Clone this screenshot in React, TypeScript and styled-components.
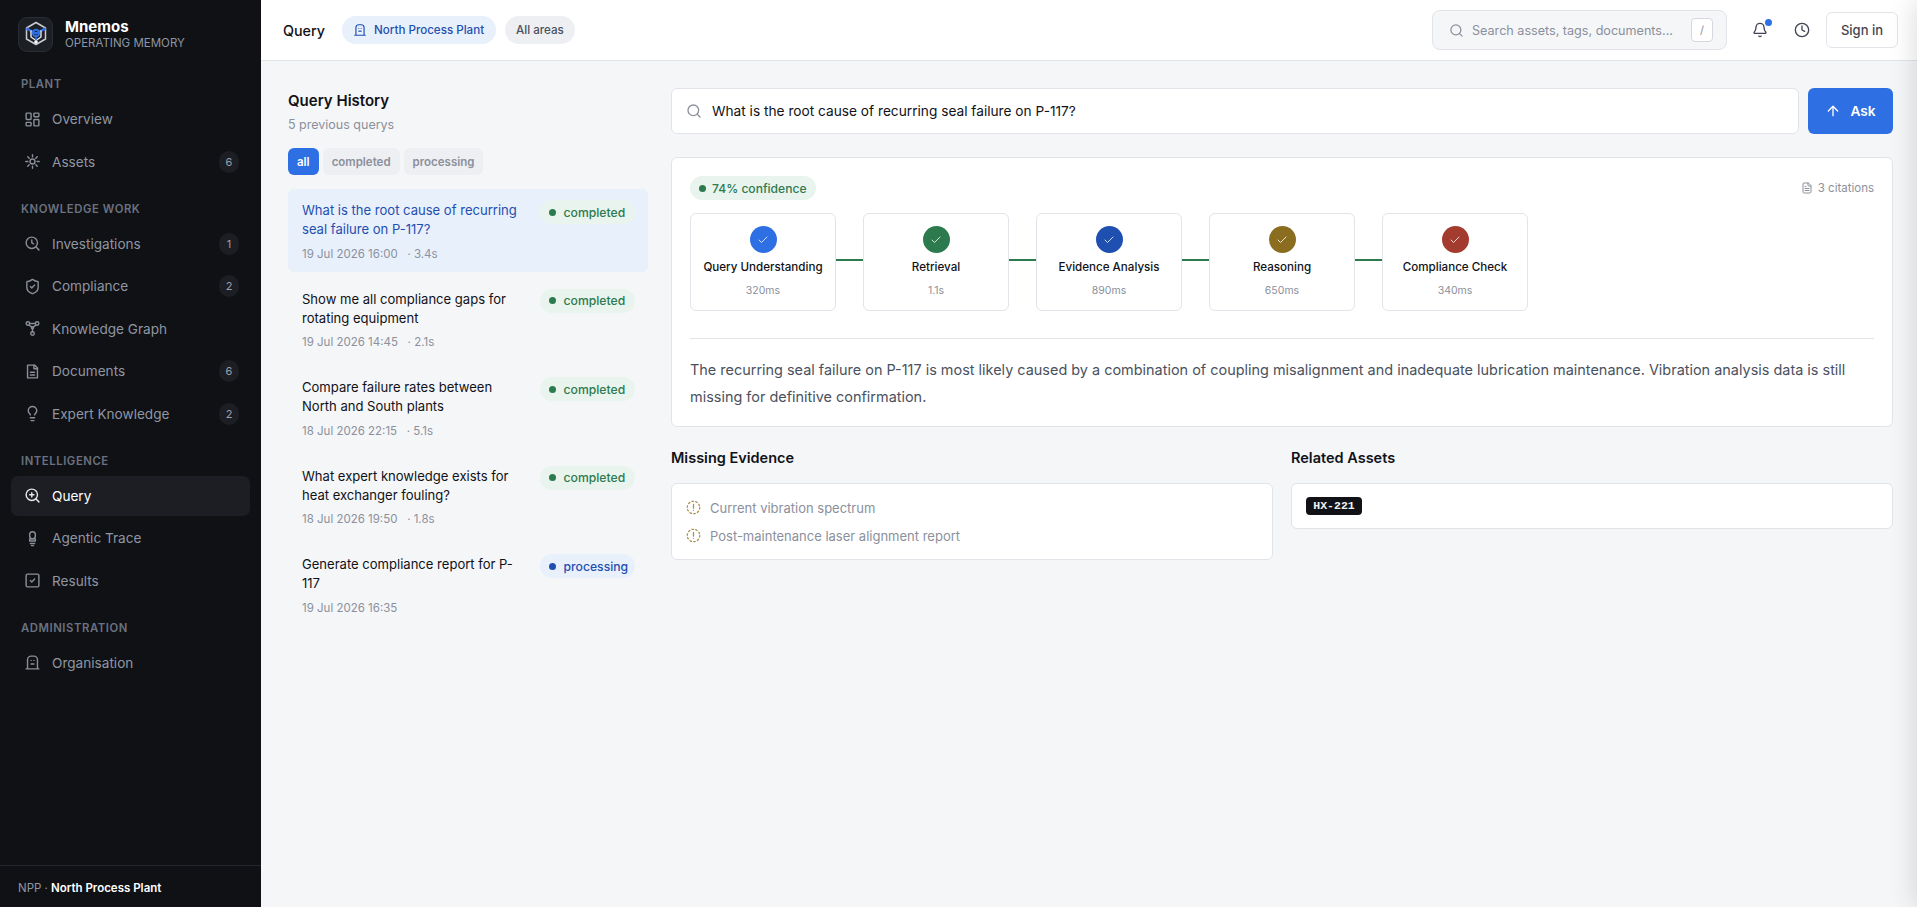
import * as React from 'react';
import styled, { createGlobalStyle } from 'styled-components';
import { ArrowUp, Bell, Check, Clock, FileText, LayoutDashboard, Lightbulb, Search, ShieldCheck, SquareCheck, ZoomIn } from 'lucide-react';

const Global = createGlobalStyle`
  * { box-sizing: border-box; }
  html, body { margin: 0; height: 100%; overflow: hidden; }
  body { font-family: Inter, "Noto Sans", sans-serif; background: #f5f6f8; color: #101218; }
`;

const Shell = styled.div`
  display: flex;
  height: 907px;
  overflow: hidden;
`;

const Aside = styled.aside`
  flex: 0 0 261px;
  display: flex;
  flex-direction: column;
  background: #0f1115;
  color: #9aa0ac;
`;

const Brand = styled.div`
  display: flex;
  align-items: center;
  gap: 12px;
  height: 68px;
  padding: 0 18px;
`;

const LogoBox = styled.div`
  width: 35px;
  height: 35px;
  display: grid;
  place-items: center;
  border-radius: 9px;
  border: 1px solid #2a2d34;
  background: #1c1f24;
`;

const BrandName = styled.div`
  font-size: 15px;
  line-height: 18px;
  font-weight: 700;
  color: #fff;
`;

const BrandSub = styled.div`
  font-size: 11.5px;
  line-height: 15px;
  color: #8f96a3;
`;

const Nav = styled.nav`
  flex: 1;
  display: flex;
  flex-direction: column;
  gap: 18.5px;
  padding: 8px 11px 0;
`;

const Section = styled.div`
  display: flex;
  flex-direction: column;
  gap: 2px;
`;

const SectionLabel = styled.div`
  height: 21px;
  padding: 0 10px;
  line-height: 16px;
  font-size: 11.3px;
  font-weight: 600;
  letter-spacing: 0.05em;
  color: #6b7180;
`;

const NavRow = styled.div<{ $active?: boolean }>`
  display: flex;
  align-items: center;
  gap: 11px;
  height: 40.5px;
  padding: 0 11px 0 13px;
  border-radius: 7px;
  font-size: 13.6px;
  color: ${p => (p.$active ? '#fff' : '#8f96a3')};
  background: ${p => (p.$active ? '#1c1e24' : 'transparent')};
  svg { flex: none; color: ${p => (p.$active ? '#e6e7ea' : '#8a8e97')}; }
`;

const NavText = styled.span`
  flex: 1;
`;

const NavBadge = styled.span`
  width: 20px;
  height: 22px;
  border-radius: 11px;
  display: grid;
  place-items: center;
  font-size: 11px;
  background: #1c1e24;
  color: #9aa0ac;
`;

const AsideFooter = styled.div`
  height: 42px;
  padding: 2px 18px 0;
  display: flex;
  align-items: center;
  border-top: 1px solid #23262d;
  font-size: 11.5px;
  color: #8f96a3;
  b { color: #fff; font-weight: 600; margin-left: 3px; }
`;

const Body = styled.div`
  flex: 1;
  min-width: 0;
  display: flex;
  flex-direction: column;
`;

const TopBar = styled.header`
  flex: 0 0 61px;
  display: flex;
  align-items: center;
  padding: 0 19px 0 22px;
  background: #fff;
  border-bottom: 1px solid #e2e4e9;
`;

const PageTitle = styled.div`
  font-size: 14.3px;
  font-weight: 500;
  margin-right: 17px;
`;

const ContextPill = styled.div<{ $blue?: boolean }>`
  display: flex;
  align-items: center;
  gap: 7px;
  height: 28px;
  padding: 0 11px;
  margin-right: 9px;
  border-radius: 14px;
  font-size: 11.6px;
  font-weight: 500;
  color: ${p => (p.$blue ? '#1f4fb0' : '#4a5160')};
  background: ${p => (p.$blue ? '#e8f0fc' : '#eeeff2')};
`;

const SitePill = styled(ContextPill)`
  padding-right: 12px;
`;

const SearchBox = styled.div`
  margin-left: auto;
  width: 295px;
  height: 40px;
  display: flex;
  align-items: center;
  gap: 8px;
  padding: 0 13px 0 16px;
  background: #f5f6f8;
  border: 1px solid #e2e4e9;
  border-radius: 8px;
  font-size: 12.6px;
  color: #8b909c;
  svg { flex: none; }
`;

const SearchText = styled.span`
  flex: 1;
  white-space: nowrap;
`;

const Kbd = styled.span`
  width: 22px;
  height: 24px;
  display: grid;
  place-items: center;
  background: #fff;
  border: 1px solid #d6d8de;
  border-radius: 4px;
  font-size: 11px;
`;

const IconButton = styled.div<{ $first?: boolean }>`
  position: relative;
  width: 16px;
  height: 16px;
  margin-left: ${p => (p.$first ? 25 : 26)}px;
  color: #3f4450;
  display: grid;
  place-items: center;
`;

const IconDot = styled.span`
  position: absolute;
  top: -3px;
  right: -4px;
  width: 7px;
  height: 7px;
  border-radius: 50%;
  background: #2f6fe4;
`;

const SignIn = styled.div`
  margin-left: 16px;
  width: 72px;
  height: 36px;
  display: grid;
  place-items: center;
  background: #fff;
  border: 1px solid #e2e4e9;
  border-radius: 6px;
  font-size: 13px;
  font-weight: 500;
  color: #3f4450;
`;

const Content = styled.main`
  flex: 1;
  display: flex;
  gap: 23px;
  padding: 27px 24px 0 27px;
`;

const History = styled.section`
  flex: 0 0 360px;
  display: flex;
  flex-direction: column;
`;

const HistoryTitle = styled.h2`
  margin: 0;
  font-size: 15px;
  line-height: 26px;
  font-weight: 600;
`;

const HistorySub = styled.div`
  font-size: 12.5px;
  line-height: 22px;
  color: #8b909c;
`;

const Filters = styled.div`
  display: flex;
  gap: 4px;
  margin: 12px 0 14px;
`;

const Filter = styled.div<{ $on?: boolean }>`
  height: 27px;
  display: flex;
  align-items: center;
  padding: 0 9px;
  border-radius: 6px;
  font-size: 11.5px;
  font-weight: 600;
  color: ${p => (p.$on ? '#fff' : '#8b909c')};
  background: ${p => (p.$on ? '#2f6fe4' : '#eeeff2')};
`;

const HistoryList = styled.div`
  display: flex;
  flex-direction: column;
  gap: 5.6px;
`;

const HistoryItem = styled.div<{ $on?: boolean }>`
  display: flex;
  align-items: flex-start;
  justify-content: space-between;
  gap: 12px;
  height: 83px;
  padding: 12px 13px 0 14px;
  border-radius: 6px;
  background: ${p => (p.$on ? '#e8f0fc' : 'transparent')};
`;

const ItemBody = styled.div`
  flex: 1;
  min-width: 0;
`;

const ItemQuestion = styled.div<{ $on?: boolean }>`
  font-size: 13.05px;
  line-height: 19px;
  color: ${p => (p.$on ? '#1f4fb0' : '#101218')};
`;

const ItemMeta = styled.div`
  margin-top: 6.5px;
  font-size: 11.5px;
  line-height: 16px;
  color: #8b909c;
`;

const StatusPill = styled.div<{ $blue?: boolean }>`
  flex: none;
  width: 95px;
  display: flex;
  align-items: center;
  gap: 7.5px;
  height: 24px;
  margin-top: -1px;
  padding: 0 4px 0 9px;
  border-radius: 12px;
  font-size: 12.2px;
  font-weight: 500;
  color: ${p => (p.$blue ? '#1f4fb0' : '#2d7a4f')};
  background: ${p => (p.$blue ? '#e8f0fc' : '#e9f4ee')};
  &::before {
    content: '';
    flex: none;
    width: 7px;
    height: 7px;
    border-radius: 50%;
    background: currentColor;
  }
`;

const Results = styled.section`
  flex: 1;
  min-width: 0;
  display: flex;
  flex-direction: column;
`;

const AskRow = styled.div`
  display: flex;
  gap: 9px;
`;

const AskInput = styled.div`
  flex: 1;
  height: 46px;
  display: flex;
  align-items: center;
  gap: 10px;
  padding: 0 14px;
  background: #fff;
  border: 1px solid #e2e4e9;
  border-radius: 6px;
  font-size: 13.7px;
  svg { color: #8b909c; }
`;

const AskButton = styled.div`
  flex: 0 0 85px;
  height: 46px;
  display: flex;
  align-items: center;
  justify-content: center;
  gap: 9px;
  background: #2f6fe4;
  border-radius: 6px;
  color: #fff;
  font-size: 13.7px;
  font-weight: 600;
`;

const AnswerCard = styled.div`
  margin-top: 23px;
  height: 270px;
  padding: 18px 18px 0;
  background: #fff;
  border: 1px solid #e2e4e9;
  border-radius: 6px;
`;

const AnswerTop = styled.div`
  display: flex;
  align-items: center;
  justify-content: space-between;
`;

const Confidence = styled(StatusPill)`
  width: auto;
  margin-top: 0;
  gap: 6px;
  padding: 0 9px;
  font-size: 12.1px;
`;

const Citations = styled.div`
  display: flex;
  align-items: center;
  gap: 5px;
  font-size: 11.5px;
  color: #8b909c;
`;

const Steps = styled.div`
  display: flex;
  align-items: center;
  margin-top: 13px;
`;

const Step = styled.div`
  flex: 0 0 146px;
  height: 98px;
  display: flex;
  flex-direction: column;
  align-items: center;
  padding-top: 12px;
  border: 1px solid #e2e4e9;
  border-radius: 6px;
`;

const StepDot = styled.div<{ $color: string }>`
  width: 27px;
  height: 27px;
  display: grid;
  place-items: center;
  border-radius: 50%;
  background: ${p => p.$color};
  color: rgba(255, 255, 255, 0.8);
`;

const StepName = styled.div`
  margin-top: 5px;
  font-size: 11.6px;
  line-height: 18px;
  font-weight: 500;
  white-space: nowrap;
`;

const StepTime = styled.div`
  margin-top: 8px;
  font-size: 10.5px;
  line-height: 14px;
  color: #8b909c;
`;

const Connector = styled.div`
  flex: 0 0 27px;
  height: 2px;
  margin-top: -5px;
  background: #2d7a4f;
`;

const Divider = styled.div`
  height: 1px;
  margin-top: 27px;
  background: #e2e4e9;
`;

const AnswerText = styled.p`
  margin: 17px 0 0;
  font-size: 14.45px;
  line-height: 27px;
  color: #4a5160;
`;

const Columns = styled.div`
  display: grid;
  grid-template-columns: 1fr 1fr;
  gap: 18px;
  margin-top: 20px;
`;

const ColumnTitle = styled.h3`
  margin: 0 0 14px;
  font-size: 14.5px;
  line-height: 22px;
  font-weight: 600;
`;

const ColumnCard = styled.div`
  padding: 13px 14px;
  background: #fff;
  border: 1px solid #e2e4e9;
  border-radius: 6px;
`;

const MissingList = styled(ColumnCard)`
  padding: 9.5px 14px;
`;

const MissingRow = styled.div`
  display: flex;
  align-items: center;
  gap: 9px;
  height: 28px;
  font-size: 13px;
  color: #8b909c;
`;

const AssetTag = styled.span`
  display: block;
  width: 56px;
  height: 18px;
  line-height: 18px;
  text-align: center;
  background: #101218;
  border-radius: 4px;
  font-family: "Liberation Mono", monospace;
  font-size: 11.5px;
  font-weight: 700;
  color: #f2f3f5;
`;

const OffscreenDrawer = styled.div`
  position: fixed;
  top: 0;
  bottom: 0;
  left: 100%;
  width: 400px;
  background: #fff;
  box-shadow: -4px 0 24px rgba(0, 0, 0, 0.12);
`;

type IconProps = { size?: number };

const Svg = ({ size = 17, children }: IconProps & { children: React.ReactNode }) => (
  <svg width={size} height={size} viewBox="0 0 24 24" fill="none" stroke="currentColor" strokeWidth="2" strokeLinecap="round" strokeLinejoin="round">
    {children}
  </svg>
);

const Logo = () => (
  <svg width="24" height="26" viewBox="0 0 24 26" fill="none" strokeLinejoin="round" strokeLinecap="round">
    <path d="M12 1.5 21.5 7v11L12 23.5 2.5 18V7z" stroke="#c9ccd2" strokeWidth="1.5" />
    <path d="M4.5 8.5 12 12.5l7.5-4" stroke="#2f6fe4" strokeWidth="2" />
    <path d="M7 10v6l5 3.5 5-3.5v-6" stroke="#e8e9ec" strokeWidth="1.4" />
    <circle cx="12" cy="12" r="3.2" stroke="#2f6fe4" strokeWidth="2" />
    <path d="M12 15v5" stroke="#2f6fe4" strokeWidth="1.6" />
    <circle cx="12" cy="21" r="1.8" fill="#fff" />
    <circle cx="3.6" cy="8" r="1.5" fill="#2f6fe4" />
    <circle cx="20.4" cy="8" r="1.5" fill="#2f6fe4" />
  </svg>
);

const SunIcon = () => (
  <Svg>
    <circle cx="12" cy="12" r="3.5" />
    <path d="M12 2.5v3M12 18.5v3M2.5 12h3M18.5 12h3M5.3 5.3l2 2M16.7 16.7l2 2M5.3 18.7l2-2M16.7 7.3l2-2" />
  </Svg>
);

const ClockSearchIcon = () => (
  <Svg>
    <circle cx="11" cy="11" r="8" />
    <path d="m21 21-4.3-4.3M11 7v4l2.5 1.5" />
  </Svg>
);

const GraphIcon = () => (
  <Svg>
    <circle cx="5.5" cy="5" r="2.5" />
    <circle cx="18.5" cy="5" r="2.5" />
    <circle cx="12" cy="19" r="2.5" />
    <circle cx="12" cy="11" r="1.5" />
    <path d="M8 5h8M7 7l4 3M17 7l-4 3M12 12.5v4" />
  </Svg>
);

const DocIcon = () => (
  <Svg>
    <path d="M5 3h10l4 4v14H5z" />
    <path d="M14 3v5h5M9 13h6M9 17h6" />
  </Svg>
);

const TraceIcon = () => (
  <Svg>
    <rect x="8" y="2.5" width="8" height="10" rx="4" />
    <path d="M8 12.5h8v3H8zM9 19h6M10.5 22h3" />
  </Svg>
);

const BuildingIcon = ({ size = 17 }: IconProps) => (
  <Svg size={size}>
    <path d="M3 21h18M5 21V8a5 5 0 0 1 5-5h4a5 5 0 0 1 5 5v13" />
    <path d="M10 9h.01M14 9h.01M10 14h4" />
  </Svg>
);

const DashedAlert = () => (
  <svg width="15" height="15" viewBox="0 0 24 24" fill="none" stroke="#a98f4d" strokeWidth="2" strokeLinecap="round">
    <circle cx="12" cy="12" r="10" strokeDasharray="2.5 3.7" />
    <path d="M12 7v6M12 16.5v.01" />
  </svg>
);

const navSections = [
  { label: 'PLANT', items: [
    { name: 'Overview', icon: <LayoutDashboard size={17} strokeWidth={2} /> },
    { name: 'Assets', icon: <SunIcon />, badge: 6 },
  ] },
  { label: 'KNOWLEDGE WORK', items: [
    { name: 'Investigations', icon: <ClockSearchIcon />, badge: 1 },
    { name: 'Compliance', icon: <ShieldCheck size={17} />, badge: 2 },
    { name: 'Knowledge Graph', icon: <GraphIcon /> },
    { name: 'Documents', icon: <DocIcon />, badge: 6 },
    { name: 'Expert Knowledge', icon: <Lightbulb size={17} />, badge: 2 },
  ] },
  { label: 'INTELLIGENCE', items: [
    { name: 'Query', icon: <ZoomIn size={17} />, active: true },
    { name: 'Agentic Trace', icon: <TraceIcon /> },
    { name: 'Results', icon: <SquareCheck size={17} /> },
  ] },
  { label: 'ADMINISTRATION', items: [
    { name: 'Organisation', icon: <BuildingIcon /> },
  ] },
];

const queries = [
  { q: 'What is the root cause of recurring seal failure on P-117?', meta: '19 Jul 2026 16:00 \u00a0 · 3.4s', status: 'completed' },
  { q: 'Show me all compliance gaps for rotating equipment', meta: '19 Jul 2026 14:45 \u00a0 · 2.1s', status: 'completed' },
  { q: 'Compare failure rates between North and South plants', meta: '18 Jul 2026 22:15 \u00a0 · 5.1s', status: 'completed' },
  { q: 'What expert knowledge exists for heat exchanger fouling?', meta: '18 Jul 2026 19:50 \u00a0 · 1.8s', status: 'completed' },
  { q: 'Generate compliance report for P-117', meta: '19 Jul 2026 16:35', status: 'processing' },
];

const steps = [
  { name: 'Query Understanding', time: '320ms', color: '#2f6fe4' },
  { name: 'Retrieval', time: '1.1s', color: '#2d7a4f' },
  { name: 'Evidence Analysis', time: '890ms', color: '#1f4fb0' },
  { name: 'Reasoning', time: '650ms', color: '#8a6d1f' },
  { name: 'Compliance Check', time: '340ms', color: '#a33b2e' },
];

const App = () => (
  <Shell>
    <Global />
    <Aside>
      <Brand>
        <LogoBox><Logo /></LogoBox>
        <div>
          <BrandName>Mnemos</BrandName>
          <BrandSub>OPERATING MEMORY</BrandSub>
        </div>
      </Brand>
      <Nav>
        {navSections.map(section => (
          <Section key={section.label}>
            <SectionLabel>{section.label}</SectionLabel>
            {section.items.map((item: any) => (
              <NavRow key={item.name} $active={item.active}>
                {item.icon}
                <NavText>{item.name}</NavText>
                {item.badge && <NavBadge>{item.badge}</NavBadge>}
              </NavRow>
            ))}
          </Section>
        ))}
      </Nav>
      <AsideFooter>NPP · <b>North Process Plant</b></AsideFooter>
    </Aside>
    <Body>
      <TopBar>
        <PageTitle>Query</PageTitle>
        <SitePill $blue><BuildingIcon size={14} />North Process Plant</SitePill>
        <ContextPill>All areas</ContextPill>
        <SearchBox>
          <Search size={15} />
          <SearchText>Search assets, tags, documents...</SearchText>
          <Kbd>/</Kbd>
        </SearchBox>
        <IconButton $first><Bell size={16} /><IconDot /></IconButton>
        <IconButton><Clock size={16} /></IconButton>
        <SignIn>Sign in</SignIn>
      </TopBar>
      <Content>
        <History>
          <HistoryTitle>Query History</HistoryTitle>
          <HistorySub>5 previous querys</HistorySub>
          <Filters>
            <Filter $on>all</Filter>
            <Filter>completed</Filter>
            <Filter>processing</Filter>
          </Filters>
          <HistoryList>
            {queries.map((item, i) => (
              <HistoryItem key={item.q} $on={i === 0}>
                <ItemBody>
                  <ItemQuestion $on={i === 0}>{item.q}</ItemQuestion>
                  <ItemMeta>{item.meta}</ItemMeta>
                </ItemBody>
                <StatusPill $blue={item.status === 'processing'}>{item.status}</StatusPill>
              </HistoryItem>
            ))}
          </HistoryList>
        </History>
        <Results>
          <AskRow>
            <AskInput>
              <Search size={16} />
              What is the root cause of recurring seal failure on P-117?
            </AskInput>
            <AskButton><ArrowUp size={16} />Ask</AskButton>
          </AskRow>
          <AnswerCard>
            <AnswerTop>
              <Confidence>74% confidence</Confidence>
              <Citations><FileText size={12} />3 citations</Citations>
            </AnswerTop>
            <Steps>
              {steps.map((step, i) => (
                <React.Fragment key={step.name}>
                  {i > 0 && <Connector />}
                  <Step>
                    <StepDot $color={step.color}><Check size={12} /></StepDot>
                    <StepName>{step.name}</StepName>
                    <StepTime>{step.time}</StepTime>
                  </Step>
                </React.Fragment>
              ))}
            </Steps>
            <Divider />
            <AnswerText>
              The recurring seal failure on P-117 is most likely caused by a combination of coupling misalignment and inadequate lubrication maintenance. Vibration analysis data is still missing for definitive confirmation.
            </AnswerText>
          </AnswerCard>
          <Columns>
            <div>
              <ColumnTitle>Missing Evidence</ColumnTitle>
              <MissingList>
                <MissingRow><DashedAlert />Current vibration spectrum</MissingRow>
                <MissingRow><DashedAlert />Post-maintenance laser alignment report</MissingRow>
              </MissingList>
            </div>
            <div>
              <ColumnTitle>Related Assets</ColumnTitle>
              <ColumnCard><AssetTag>HX-221</AssetTag></ColumnCard>
            </div>
          </Columns>
        </Results>
      </Content>
    </Body>
    <OffscreenDrawer />
  </Shell>
);

export default App;
